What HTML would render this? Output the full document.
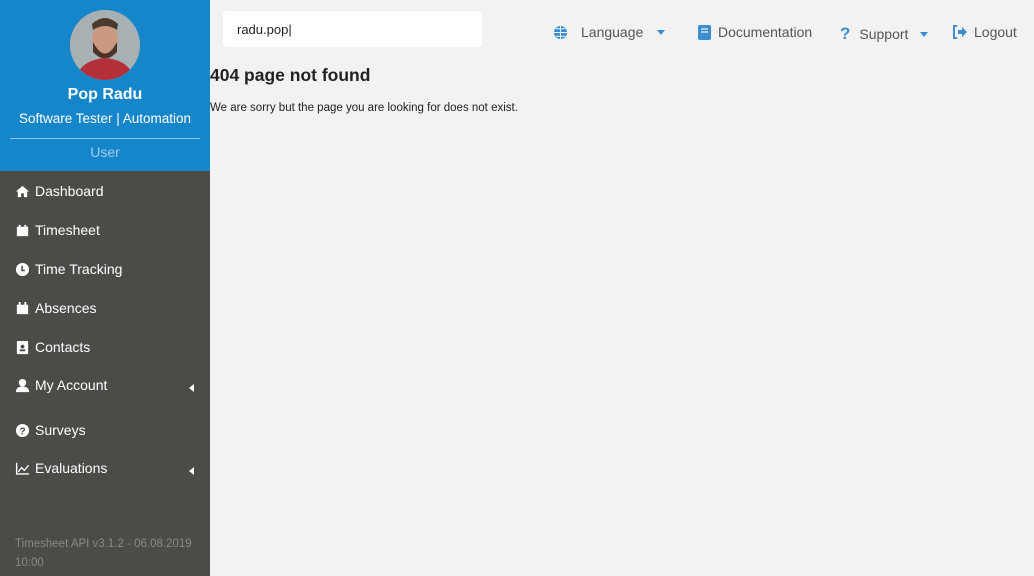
<!DOCTYPE html>
<html><head><style>
*{margin:0;padding:0;box-sizing:border-box}
body{width:1034px;height:576px;background:#f2f2f2;font-family:"Liberation Sans",sans-serif;position:relative;overflow:hidden}
#side{position:absolute;left:0;top:0;width:210px;height:576px;background:#4b4b47}
#prof{height:171px;background:#1686cb;text-align:center;color:#fff;position:relative}
.av{position:absolute;left:70px;top:10px;width:70px;height:70px;border-radius:50%;overflow:hidden;background:#9aa4a8}
.nm{position:absolute;top:86px;width:100%;font-weight:bold;font-size:16px}
.jb{position:absolute;top:111px;width:100%;font-size:13.5px}
.ln{position:absolute;top:138px;left:10px;width:190px;border-top:1px solid #8cc3e8}
.us{position:absolute;top:144px;width:100%;font-size:14px;color:#9fcdee}
.it{position:absolute;left:15px;color:#fff;font-size:14px;display:flex;align-items:center}
.it svg{width:15px;height:15px;margin-right:5px;fill:#fff}
.car{position:absolute;left:189px;width:0;height:0;border-top:4px solid transparent;border-bottom:4px solid transparent;border-right:5px solid #fff}
.ft{position:absolute;left:15px;top:535px;color:#8a8a85;font-size:11.5px;line-height:19px;width:185px}
#srch{position:absolute;left:223px;top:11px;width:259px;height:36px;background:#fff;border-radius:3px;font-size:13px;padding:11px 14px;color:#222}
.nav{position:absolute;top:24px;font-size:14px;color:#555;display:flex;align-items:center}
.nav svg{fill:#3b8fd1}
.dd{display:inline-block;border-left:4px solid transparent;border-right:4px solid transparent;border-top:5px solid #3b8fd1;margin-left:12px}
h1{position:absolute;left:210px;top:65px;font-size:17.5px;font-weight:bold;color:#222}
p{position:absolute;left:210px;top:102px;font-size:11.5px;color:#222}
</style></head><body>
<div id="side">
<div id="prof">
<div class="av"><svg width="70" height="70"><rect width="70" height="70" fill="#a7b0b3"/><ellipse cx="35" cy="30" rx="13" ry="17" fill="#c99a80"/><path d="M22 14 Q35 2 48 14 L47 20 Q35 12 23 20Z" fill="#4a3a30"/><path d="M23 32 Q35 55 47 32 L47 42 Q35 55 23 42Z" fill="#4a3428"/><path d="M5 70 Q10 50 35 48 Q60 50 65 70Z" fill="#b3303a"/></svg></div>
<div class="nm">Pop Radu</div><div class="jb">Software Tester | Automation</div><div class="ln"></div><div class="us">User</div>
</div>
<div class="it" style="top:183px"><svg viewBox="0 0 16 16"><path d="M8 2 L1 8 L3 8 L3 14 L6.5 14 L6.5 10 L9.5 10 L9.5 14 L13 14 L13 8 L15 8Z"/></svg>Dashboard</div>
<div class="it" style="top:222px"><svg viewBox="0 0 16 16"><path d="M2 4h12v10H2z M4 2h2v3H4z M10 2h2v3h-2z"/></svg>Timesheet</div>
<div class="it" style="top:261px"><svg viewBox="0 0 16 16"><circle cx="8" cy="8" r="7"/><path d="M7.5 4v5h3" stroke="#4b4b47" stroke-width="1.6" fill="none"/></svg>Time Tracking</div>
<div class="it" style="top:300px"><svg viewBox="0 0 16 16"><path d="M2 4h12v10H2z M4 1h2v3H4z M10 1h2v3h-2z"/></svg>Absences</div>
<div class="it" style="top:339px"><svg viewBox="0 0 16 16"><rect x="2" y="1" width="12" height="14" rx="1"/><circle cx="8" cy="7" r="2" fill="#4b4b47"/><rect x="5" y="10" width="6" height="2" fill="#4b4b47"/></svg>Contacts</div>
<div class="it" style="top:377px"><svg viewBox="0 0 16 16"><circle cx="8" cy="5" r="4"/><path d="M1 15 Q1 9 8 9 Q15 9 15 15Z"/></svg>My Account</div>
<div class="car" style="top:384px"></div>
<div class="it" style="top:422px"><svg viewBox="0 0 16 16"><circle cx="8" cy="8" r="7"/><text x="8" y="12" font-size="11" text-anchor="middle" fill="#4b4b47" font-weight="bold">?</text></svg>Surveys</div>
<div class="it" style="top:460px"><svg viewBox="0 0 16 16"><path d="M1 2h1.5v11H15v1.5H1z M3 11l4-5 3 3 4-5 1 1-5 6-3-3-3 4z"/></svg>Evaluations</div>
<div class="car" style="top:467px"></div>
<div class="ft">Timesheet API v3.1.2 - 06.08.2019 10:00</div>
</div>
<div id="srch">radu.pop|</div>
<div class="nav" style="left:553px"><svg width="15" height="15" viewBox="0 0 16 16"><circle cx="8" cy="8" r="7"/><path d="M1 8h14M8 1v14M3 4h10M3 12h10" stroke="#f2f2f2" stroke-width="1" fill="none"/></svg><span style="margin-left:13px">Language</span><span class="dd" style="margin-left:14px"></span></div>
<div class="nav" style="left:698px"><svg width="13" height="15" viewBox="0 0 13 15"><rect width="13" height="15" rx="2"/><path d="M3 4h7M3 7h7" stroke="#f2f2f2" stroke-width="1.3"/></svg><span style="margin-left:7px">Documentation</span></div>
<div class="nav" style="left:840px"><span style="color:#3b8fd1;font-weight:bold;font-size:17px">?</span><span style="margin-left:9px">Support</span><span class="dd"></span></div>
<div class="nav" style="left:952px"><svg width="15" height="14" viewBox="0 0 15 14"><path d="M5 1H2v12h3" stroke="#3b8fd1" stroke-width="2" fill="none"/><path d="M6 5h4V2l5 5-5 5V9H6z"/></svg><span style="margin-left:7px">Logout</span></div>
<h1>404 page not found</h1>
<p>We are sorry but the page you are looking for does not exist.</p>
</body></html>
